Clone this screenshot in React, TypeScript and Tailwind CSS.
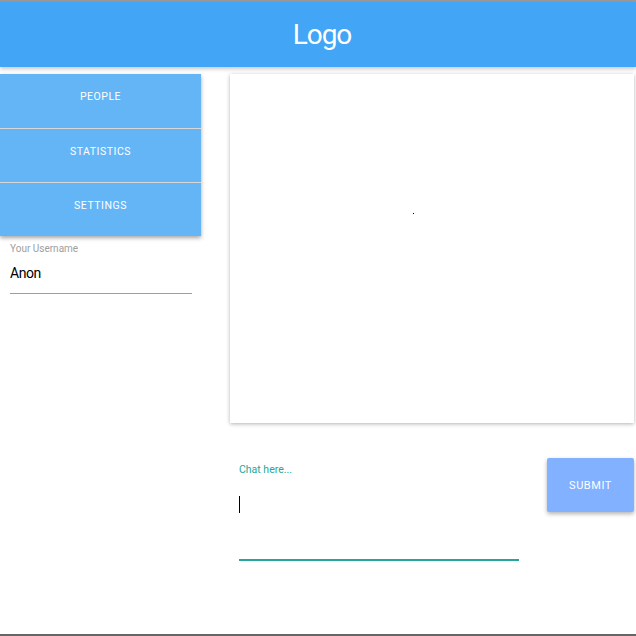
const menuItems = ['People', 'Statistics', 'Settings'];

export default function App() {
  return (
    <div className="flex h-[636px] w-[636px] flex-col overflow-hidden bg-white font-['Roboto',sans-serif]">
      <div className="h-[2px] bg-[#9a9a9a]" />
      <header className="relative z-10 flex h-[65px] items-center justify-center bg-[#42a5f5] shadow-[0_2px_4px_rgba(0,0,0,0.22)]">
        <h1 className="ml-[8px] text-[28px] font-normal leading-none tracking-[-0.04em] text-white">Logo</h1>
      </header>

      <main className="flex flex-1 pt-[7px]">
        <aside className="w-[201px] shrink-0">
          <nav className="flex flex-col bg-[#64b5f6] shadow-[0_2px_4px_rgba(0,0,0,0.35)]">
            {menuItems.map((item, i) => (
              <button
                key={item}
                className={`flex h-[54px] w-full items-center justify-center pb-[8px] text-[10.5px] uppercase tracking-[0.05em] text-white ${
                  i > 0 ? 'border-t border-[#d6d6d6]' : ''
                }`}
              >
                {item}
              </button>
            ))}
          </nav>

          <div className="mt-[7px] w-[192px] pl-[10px]">
            <label className="block text-[10px] leading-[12px] text-[#9e9e9e]">Your Username</label>
            <div className="mt-[10px] border-b border-[#9e9e9e] pb-[12px] text-[14px] leading-[16px] tracking-[-0.03em] text-black">
              Anon
            </div>
          </div>
        </aside>

        <section className="ml-[29px] flex flex-1 flex-col pr-[2px]">
          <div className="relative h-[349px] bg-white shadow-[0_1px_4px_rgba(0,0,0,0.3)]">
            <span className="absolute left-[183px] top-[139px] h-px w-px bg-black" />
          </div>

          <div className="mt-[35px] flex items-start">
            <div className="ml-[9px] w-[280px]">
              <label className="block pt-[6px] text-[10.5px] leading-[12px] text-[#26a69a]">Chat here...</label>
              <div className="mt-[20px] h-[65px] border-b-2 border-[#26a69a]">
                <span className="block h-[17px] w-px bg-black" />
              </div>
            </div>
            <button className="ml-auto h-[54px] w-[87px] rounded-[2px] bg-[#82b1ff] pt-[3px] text-[11px] uppercase tracking-[0.05em] text-white shadow-[0_2px_4px_rgba(0,0,0,0.3)]">
              Submit
            </button>
          </div>
        </section>
      </main>

      <div className="h-[2px] bg-[#666666]" />
    </div>
  );
}
